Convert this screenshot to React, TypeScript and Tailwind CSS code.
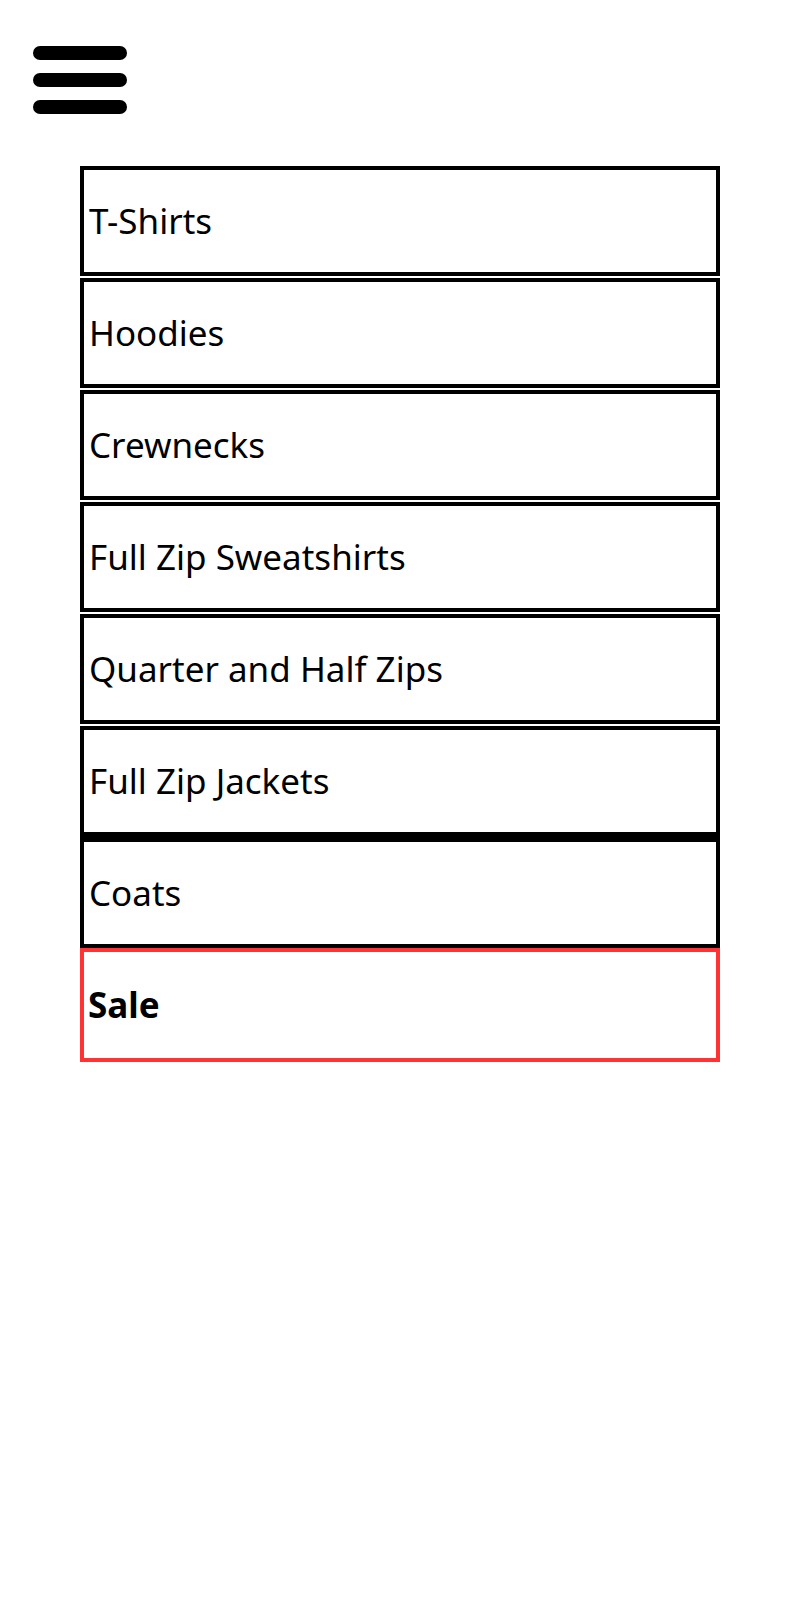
import React from "react";

const items = [
  "T-Shirts",
  "Hoodies",
  "Crewnecks",
  "Full Zip Sweatshirts",
  "Quarter and Half Zips",
  "Full Zip Jackets",
];

export default function App() {
  return (
    <div className="w-[800px] h-[1600px] bg-white" style={{ fontFamily: '"Noto Sans", "Open Sans", sans-serif' }}>
      <div className="pt-[46px] pl-[33px] flex flex-col gap-[13px]">
        <div className="w-[94px] h-[14px] rounded-full bg-black" />
        <div className="w-[94px] h-[14px] rounded-full bg-black" />
        <div className="w-[94px] h-[14px] rounded-full bg-black" />
      </div>
      <div className="mt-[52px] ml-[80px] w-[640px] flex flex-col">
        {items.map((t) => (
          <div
            key={t}
            className="h-[110px] mb-[2px] border-4 border-black flex items-center pl-[5px] text-[35px] text-black"
          >
            {t}
          </div>
        ))}
        <div className="h-[112px] mt-[-2px] border-4 border-t-[6px] border-black flex items-center pl-[5px] text-[35px] text-black">
          Coats
        </div>
        <div className="h-[114px] border-4 border-[#ff3333] flex items-center pl-[4px] text-[35px] font-bold text-black">
          Sale
        </div>
      </div>
    </div>
  );
}
